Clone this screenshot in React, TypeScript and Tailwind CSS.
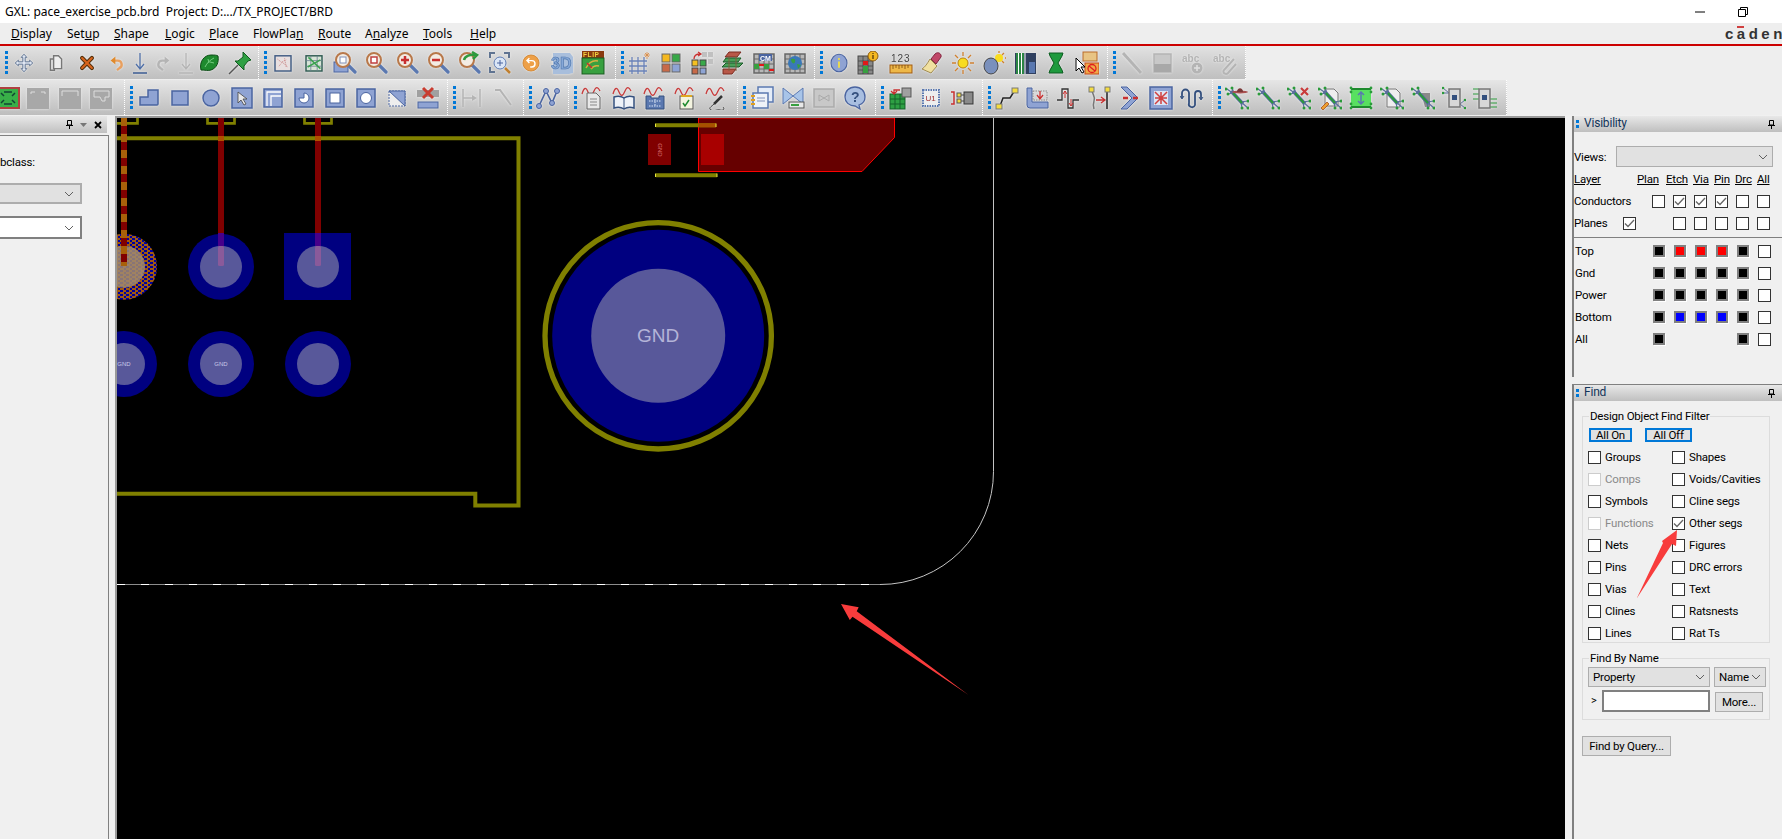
import React from "react";
import clsx from "clsx";

const FONT = "font-['Noto_Sans','Liberation_Sans',sans-serif]";
const PANEL_FONT = "font-['Roboto','Liberation_Sans',sans-serif] text-[11.5px] tracking-[-0.2px]";
const FILL = "#8fa3d3";
const EDGE = "#4a64a0";
const OFF = "#b4b4b4";

function Ico({ ml = "ml-[7px]", children }: { ml?: string; children: React.ReactNode }) {
  return (
    <svg viewBox="0 0 24 24" className={clsx("h-6 w-6 shrink-0 drop-shadow-[0_0_1px_#eeeeee]", ml)}>
      {children}
    </svg>
  );
}

// most toolbar glyphs sit a bit inside their 24px cell
function Sm({ children }: { children: React.ReactNode }) {
  return <g transform="translate(2.4 2.4) scale(.8)">{children}</g>;
}

function Grip({ n = 5 }: { n?: number }) {
  return (
    <span className="ml-[5px] mr-[2px] flex w-[3px] shrink-0 flex-col gap-[2px]">
      {Array.from({ length: n }).map((_, i) => (
        <span key={i} className="block h-[3px] w-[3px] bg-[#0078d7]" />
      ))}
    </span>
  );
}

function Group({ w, grip = true, children }: { w: string; grip?: boolean; children: React.ReactNode }) {
  return (
    <div className={clsx("flex h-full shrink-0 items-center border-r border-dotted border-white", w)}>
      {grip && <Grip />}
      {children}
    </div>
  );
}

function Mag({ children }: { children?: React.ReactNode }) {
  return (
    <>
      <path d="M15 14l7 7" stroke="#5a78b0" strokeWidth="3.2" strokeLinecap="round" />
      <circle cx="10" cy="9" r="7" fill="#f3ece4" stroke="#b8784a" strokeWidth="2" />
      {children}
    </>
  );
}

function GridBox({ stroke = "#666" }: { stroke?: string }) {
  return (
    <>
      <rect x="2" y="3" width="20" height="19" fill="#b8b8b8" stroke={stroke} strokeWidth="1.5" />
      <path d="M2 8h20M2 13h20M2 18h20M7 3v19M12 3v19M17 3v19" stroke={stroke} strokeWidth="1" />
    </>
  );
}

function Wave() {
  return <path d="M1 8c2-7 4-7 6-2s4 4 6-1 4-4 6 0" fill="none" stroke="#c83c3c" strokeWidth="1.3" />;
}

function Net({ children }: { children?: React.ReactNode }) {
  const dots = [[1, 3], [3, 8], [7, 2], [23, 15], [23, 22], [17, 22]];
  return (
    <>
      <path d="M2 3l7 5M3 8l5-1M7 2l2 5M15 16l8-1M16 16l7 6M16 16l1 6" stroke="#5a6e9e" strokeWidth="1.200" />
      <path d="M6 5l12 13" stroke="#5a6e9e" strokeWidth="3.600" />
      <path d="M8 7l9 10" stroke="#2a9a3a" strokeWidth="2" />
      {children}
      {dots.map(([x, y]) => (
        <circle key={x * 30 + y} cx={x} cy={y} r="1.500" fill="#2a9a3a" />
      ))}
    </>
  );
}

function Cursor() {
  return <path d="M1 7v13l3-3 3 5 2-1-3-5h4z" fill="#fff" stroke="#000" strokeWidth="1" />;
}

function ToolbarOne() {
  return (
    <div className="flex h-[33px] w-[1246px] bg-linear-to-b from-[#e2e2e2] to-[#bfbfbf]">
      <Group w="w-[259px]">
        <Ico ml="ml-[2px]">
          <Sm>
            <path d="M12 1l3.500 4h-2v5.500H19v-2l4 3.500-4 3.500v-2h-5.500V19h2L12 23l-3.500-4h2v-5.500H5v2L1 12l4-3.500v2h5.500V5h-2z" fill="#dfe6f2" stroke="#5f7391" strokeWidth="1.200" />
          </Sm>
        </Ico>
        <Ico ml="ml-[8px]">
          <Sm>
            <path d="M5 7h5v14H5z" fill="#e4e4e4" stroke="#777" strokeWidth="1.800" />
            <path d="M9 3h6l4 4v12H9z" fill="#eeeeee" stroke="#777" strokeWidth="1.800" />
          </Sm>
        </Ico>
        <Ico ml="ml-[7px]">
          <g transform="translate(3.600 3.600) scale(.7)">
            <path d="M5 5l14 14M19 5L5 19" stroke="#54300c" strokeWidth="6" strokeLinecap="round" />
            <path d="M5 5l14 14M19 5L5 19" stroke="#d8641c" strokeWidth="3" strokeLinecap="round" />
          </g>
        </Ico>
        <Ico ml="ml-[6px]">
          <Sm>
            <path d="M8 9h5a5 5 0 0 1 2 9.500L12 21" fill="none" stroke="#e8a060" strokeWidth="3" />
            <path d="M10 4L4 9l6 5z" fill="#e08a2c" />
          </Sm>
        </Ico>
        <Ico ml="-ml-[1px]">
          <path d="M12 2v15M8 13l4 5 4-5" fill="none" stroke="#5070a8" strokeWidth="1.300" />
          <path d="M5 22h14" stroke="#3a5a90" strokeWidth="1.500" />
        </Ico>
        <Ico ml="-ml-[1px]">
          <Sm>
            <path d="M16 9h-5a5 5 0 0 0-2 9.500L12 21" fill="none" stroke={OFF} strokeWidth="3" />
            <path d="M14 4l6 5-6 5z" fill={OFF} />
          </Sm>
        </Ico>
        <Ico ml="-ml-[1px]">
          <path d="M12 2v15M8 13l4 5 4-5" fill="none" stroke={OFF} strokeWidth="1.300" />
          <path d="M5 22h14" stroke={OFF} strokeWidth="1.500" />
        </Ico>
        <Ico ml="-ml-[1px]">
          <path d="M4 19c-2-8 3-15 10-15 3 0 6 0 7 1 1 6-1 12-7 14-3 1-6 0-10 0z" fill="#1e8a2e" stroke="#0a4a14" />
          <path d="M8 16c2-4 5-7 9-9M12 12l-1-4M13 11l4 1" fill="none" stroke="#7fd48a" strokeWidth=".9" />
        </Ico>
        <Ico ml="ml-[7px]">
          <path d="M1 23l9-9" stroke="#555" strokeWidth="1.500" />
          <path d="M15 1l8 8-3 1-4 5v4L7 10h3l5-4z" fill="#2ea043" stroke="#0f5a1e" />
        </Ico>
      </Group>
      <Group w="w-[357px]">
        <Ico ml="ml-[2px]">
          <Sm>
            <rect x="2" y="3" width="20" height="19" fill="#e8e0e0" stroke="#3f5a82" strokeWidth="1.800" />
            <path d="M5 7l5 4 6-3M7 16l4-5 7 6M14 6l2 11" stroke="#c88080" strokeDasharray="1.500 1" fill="none" />
          </Sm>
        </Ico>
        <Ico>
          <Sm>
            <rect x="2" y="3" width="20" height="19" fill="#d8e4d8" stroke="#2f5a52" strokeWidth="1.800" />
            <path d="M8 3v19M16 3v19M2 9h20M2 16h20" stroke="#6a7f90" />
            <path d="M5 5l15 14M4 17L20 8" stroke="#3aa050" strokeWidth="1.800" />
          </Sm>
        </Ico>
        <Ico>
          <rect x="1" y="11" width="14" height="10" fill={FILL} stroke={EDGE} />
          <Mag><rect x="7" y="6" width="6" height="6" fill="#fff" stroke="#8090b8" /></Mag>
        </Ico>
        <Ico>
          <Mag><rect x="7" y="6" width="6" height="6" fill="#fff" stroke="#c04040" strokeWidth="1.500" /></Mag>
        </Ico>
        <Ico>
          <Mag><path d="M6 9h8M10 5v8" stroke="#c83030" strokeWidth="2.500" /></Mag>
        </Ico>
        <Ico>
          <Mag><path d="M6 9h8" stroke="#c83030" strokeWidth="2.500" /></Mag>
        </Ico>
        <Ico>
          <Mag><path d="M7 9c1-4 6-6 12-5M15 1l5 3-4 4" fill="none" stroke="#2e9a3e" strokeWidth="2.500" /></Mag>
        </Ico>
        <Ico>
          <path d="M2 7V2h5M16 2h5v5M2 16v5h5" fill="none" stroke="#5f7391" strokeWidth="2" />
          <path d="M17 17l5 5" stroke="#c08030" strokeWidth="2.500" />
          <circle cx="12" cy="12" r="6" fill="#dbe6f6" stroke="#5a78b0" />
          <path d="M9 12h6M12 9v6" stroke="#4a64a0" />
        </Ico>
        <Ico>
          <Sm>
            <circle cx="12" cy="12" r="10" fill="#eda048" stroke="#d08028" />
            <path d="M8 9h5a4 4 0 0 1 0 8h-2M10 6L7 9l3 3" fill="none" stroke="#fff" strokeWidth="1.800" />
          </Sm>
        </Ico>
        <Ico>
          <path d="M3 2h17l3 4v16l-4 1H3z" fill="#a8bedc" />
          <text x="1" y="18" fontFamily="Liberation Sans" fontWeight="700" fontSize="16" fill="#86a8d8" stroke="#4a72a8" strokeWidth=".6">3D</text>
        </Ico>
        <Ico>
          <rect x="1" y="0" width="22" height="7" fill="#8a3a10" />
          <text x="2" y="6" fontFamily="Liberation Sans" fontWeight="700" fontSize="6.500" fill="#f0d040" letterSpacing=".6">FLIP</text>
          <rect x="1" y="7" width="22" height="16" fill="#38a040" stroke="#1a5a20" />
          <path d="M5 17c3-6 7-8 12-7M10 18c2-3 4-4 8-3" fill="none" stroke="#d8b040" strokeWidth="1.500" />
          <path d="M6 12l5 5" stroke="#c83030" strokeWidth="1.500" />
        </Ico>
      </Group>
      <Group w="w-[199px]">
        <Ico ml="ml-[2px]">
          <path d="M1 10h18M1 15h18M1 20h18M4 6v17M10 6v17M16 6v17" stroke="#6a82b8" strokeWidth="1.300" />
          <path d="M19 1v7M16 4h6M17 2l4 4M21 2l-4 4" stroke="#d88840" strokeWidth=".8" />
        </Ico>
        <Ico>
          <rect x="3" y="3" width="8" height="8" fill="#f4b820" stroke="#666" />
          <rect x="13" y="3" width="8" height="8" fill="#38a848" stroke="#666" />
          <rect x="3" y="13" width="8" height="8" fill="#c86a48" stroke="#666" />
          <rect x="13" y="13" width="8" height="8" fill="#8ea4d4" stroke="#666" />
        </Ico>
        <Ico>
          <path d="M12 1h5v5h-5zM18 1h5v5h-5zM18 8h5v5h-5z" fill="#c0c0c0" />
          <rect x="2" y="9" width="6" height="6" fill="#f4c020" stroke="#444" />
          <rect x="10" y="9" width="6" height="6" fill="#38a848" stroke="#444" />
          <rect x="2" y="17" width="6" height="6" fill="#c86a48" stroke="#444" />
          <rect x="10" y="17" width="6" height="6" fill="#8ea4d4" stroke="#444" />
          <path d="M4 8c0-3 2-5 6-5M8 1l3 2-3 2" fill="none" stroke="#c83030" strokeWidth="1.300" />
        </Ico>
        <Ico>
          <path d="M8 1h12l-4 5H4zM2 18h13l-4 5H2z" fill="#b85848" stroke="#7a2a20" />
          <path d="M5 7h15l-3 4H2zM5 12h17l-4 4H1z" fill="#48a058" stroke="#1a5a28" />
          <path d="M8 5v15M15 5v15" stroke="#806040" />
        </Ico>
        <Ico>
          <GridBox />
          <rect x="7" y="3" width="13" height="7" fill="#4a64a0" />
          <text x="8" y="9.500" fontFamily="Liberation Sans" fontWeight="700" fontSize="7" fill="#fff">CM</text>
          <path d="M7 13h5v2H7zM17 18h5v2h-5z" fill="#e01818" />
          <path d="M2 13h5v5H2zM12 13h5v5h-5z" fill="#38a040" />
        </Ico>
        <Ico>
          <GridBox />
          <circle cx="12" cy="12" r="7" fill="#3a78b8" />
          <path d="M8 8c3-1 5 0 4 3s-4 1-4-3zM14 13l4 1-3 4z" fill="#38a040" />
        </Ico>
      </Group>
      <Group w="w-[293px]">
        <Ico ml="ml-[2px]">
          <Sm>
            <ellipse cx="12" cy="12" rx="10" ry="11" fill={FILL} stroke={EDGE} strokeWidth="1.300" />
            <path d="M12 10v8" stroke="#f4e040" strokeWidth="2.200" />
            <circle cx="12" cy="7" r="1.300" fill="#f4e040" />
          </Sm>
        </Ico>
        <Ico ml="ml-[4px]">
          <rect x="3" y="5" width="15" height="18" fill="#888" stroke="#444" />
          <path d="M3 10h15M3 15h15M3 19h15M8 5v18M13 5v18" stroke="#444" strokeWidth=".8" />
          <path d="M8 10h5v4H8z" fill="#e01818" />
          <path d="M8 15h5v7H8z" fill="#38a040" />
          <circle cx="18" cy="5" r="5" fill="#f4b820" stroke="#8a5a10" />
          <path d="M18 4v4M18 2v1" stroke="#5a3a08" strokeWidth="1.300" />
        </Ico>
        <Ico ml="ml-[10px]">
          <text x="2" y="11" fontFamily="Liberation Sans" fontSize="10" letterSpacing="1" fill="#444">123</text>
          <rect x="1" y="14" width="22" height="8" fill="#eeb848" stroke="#a05a10" />
          <path d="M4 14v4M7 14v3M10 14v4M13 14v3M16 14v4M19 14v3" stroke="#7a4a10" strokeWidth=".8" />
        </Ico>
        <Ico>
          <path d="M10 8l7 7-6 7-9-4c3-2 5-5 8-10z" fill="#f0e0a0" stroke="#a08a50" />
          <path d="M11 8l4-5c3-3 7 0 6 3l-5 7z" fill="#c04868" stroke="#802840" />
        </Ico>
        <Ico>
          <circle cx="12" cy="12" r="5" fill="#f8dc20" stroke="#b88010" />
          <path d="M12 1v4M12 19v4M1 12h4M19 12h4M4 4l3 3M17 17l3 3M4 20l3-3M17 7l3-3" stroke="#d08030" strokeWidth="1.300" />
        </Ico>
        <Ico>
          <circle cx="17" cy="7" r="4" fill="#f8dc20" />
          <path d="M17 0v2M23 7h1M22 2l-2 2M22 12l-2-2" stroke="#d08030" strokeWidth="1.300" />
          <ellipse cx="9" cy="15" rx="7" ry="8" fill="#7a90bc" stroke="#444" />
        </Ico>
        <Ico>
          <rect x="2" y="2" width="21" height="21" fill="#304060" />
          <path d="M4 2v21M7 2v21M10 2v21" stroke="#2a9a3a" strokeWidth="1.500" />
          <path d="M5.500 2v21M8.500 2v21M12 2v21" stroke="#fff" strokeWidth="1" />
          <rect x="16" y="11" width="6" height="11" fill="#5a78b0" />
        </Ico>
        <Ico>
          <path d="M5 2h14l-1 3-4 7 4 7 1 3H5l1-3 4-7-4-7z" fill="#1f9a3e" stroke="#0c5a20" />
        </Ico>
        <Ico>
          <rect x="8" y="1" width="14" height="9" fill="#e8c484" stroke="#b86a28" />
          <rect x="10" y="12" width="14" height="11" fill="#f0a848" stroke="#c84818" />
          <circle cx="17" cy="17.500" r="4" fill="none" stroke="#e02020" strokeWidth="1.300" />
          <path d="M14 15l6 5" stroke="#e02020" strokeWidth="1.300" />
          <Cursor />
        </Ico>
      </Group>
      <Group w="w-[138px]">
        <Ico ml="ml-[2px]">
          <path d="M3 2l18 20" stroke={OFF} strokeWidth="3" />
        </Ico>
        <Ico>
          <rect x="3" y="3" width="17" height="18" fill="#c8c8c8" stroke={OFF} strokeWidth="1.500" />
          <rect x="3" y="13" width="17" height="8" fill="#a8a8a8" />
        </Ico>
        <Ico>
          <text x="0" y="11" fontFamily="Liberation Sans" fontWeight="700" fontSize="10" fill={OFF}>abc</text>
          <circle cx="15" cy="17" r="5.500" fill={OFF} />
          <path d="M12 17h6M15 14v6" stroke="#e0e0e0" strokeWidth="1.500" />
        </Ico>
        <Ico>
          <text x="0" y="11" fontFamily="Liberation Sans" fontWeight="700" fontSize="10" fill={OFF}>abc</text>
          <path d="M21 8L11 19c-2 3 2 5 4 3l8-9" fill="none" stroke={OFF} strokeWidth="2" />
        </Ico>
      </Group>
    </div>
  );
}

function ToolbarTwo() {
  return (
    <div className="mt-[1px] flex h-[35px] w-[1507px] bg-linear-to-b from-[#e6e6e6] to-[#bdbdbd]">
      <Group w="w-[125px]" grip={false}>
        <Ico ml="-ml-[4px]">
          <rect x="1" y="2" width="22" height="20" fill="#38b048" stroke="#b04040" strokeWidth="2" />
          <path d="M5 7l3 3M19 7l-3 3M5 17l3-3M19 17l-3-3M8 6h8M8 18h8" stroke="#143" strokeWidth="1.500" />
        </Ico>
        <Ico ml="ml-[6px]">
          <rect x="1" y="2" width="22" height="21" fill="#a8a8a8" />
          <path d="M5 8V6h4M15 6h4v2" fill="none" stroke="#ddd" />
        </Ico>
        <Ico ml="ml-[8px]">
          <rect x="1" y="2" width="22" height="21" fill="#a8a8a8" />
          <path d="M4 10V5h16v5" fill="none" stroke="#ddd" />
        </Ico>
        <Ico ml="ml-[7px]">
          <rect x="1" y="2" width="22" height="21" fill="#a8a8a8" />
          <path d="M5 5h15v6h-4v4h-3l-2-4H5z" fill="none" stroke="#ddd" />
        </Ico>
      </Group>
      <Group w="w-[323px]">
        <Ico ml="ml-[2px]">
          <path d="M11 4h10v14a1 1 0 0 1-1 1H3v-8h8z" fill={FILL} stroke={EDGE} strokeWidth="1.500" />
        </Ico>
        <Ico>
          <rect x="4" y="5" width="16" height="14" fill={FILL} stroke={EDGE} strokeWidth="1.500" />
        </Ico>
        <Ico>
          <circle cx="12" cy="12" r="8" fill={FILL} stroke={EDGE} strokeWidth="1.500" />
        </Ico>
        <Ico>
          <rect x="2" y="2" width="20" height="20" fill={FILL} stroke={EDGE} strokeWidth="1.500" />
          <path d="M8 6v11l3-3 3 5 2-1-3-5h4z" fill="#e8e8e8" stroke="#444" strokeWidth=".8" />
        </Ico>
        <Ico>
          <rect x="3" y="3" width="18" height="18" fill={FILL} stroke={EDGE} strokeWidth="1.500" />
          <path d="M6 20V6h14M10 20V10h10" fill="none" stroke="#fff" strokeWidth="1.300" />
        </Ico>
        <Ico>
          <rect x="3" y="3" width="18" height="18" fill={FILL} stroke={EDGE} strokeWidth="1.500" />
          <path d="M12 7a5 5 0 1 1-5 5h5z" fill="#fff" stroke={EDGE} />
        </Ico>
        <Ico>
          <rect x="3" y="3" width="18" height="18" fill={FILL} stroke={EDGE} strokeWidth="1.500" />
          <rect x="7" y="7" width="10" height="10" fill="#fff" stroke={EDGE} />
        </Ico>
        <Ico>
          <rect x="3" y="3" width="18" height="18" fill={FILL} stroke={EDGE} strokeWidth="1.500" />
          <circle cx="12" cy="12" r="5.500" fill="#fff" stroke={EDGE} />
        </Ico>
        <Ico>
          <path d="M4 5h16v15H4z" fill="#eeeeee" stroke={EDGE} strokeDasharray="2 1" />
          <path d="M4 5h16v15z" fill={FILL} stroke={EDGE} />
        </Ico>
        <Ico>
          <rect x="1" y="4" width="22" height="7" fill="#a0a0a0" />
          <path d="M7 2l10 10M17 2L7 12" stroke="#c83c30" strokeWidth="3" />
          <rect x="2" y="16" width="20" height="6" fill={FILL} stroke={EDGE} />
        </Ico>
      </Group>
      <Group w="w-[76px]">
        <Ico ml="ml-[2px]">
          <path d="M3 3v18M3 12h12M20 3v18" stroke={OFF} strokeWidth="1.500" />
          <path d="M12 9l5 3-5 3z" fill={OFF} />
        </Ico>
        <Ico>
          <path d="M4 4h5l11 15" fill="none" stroke={OFF} strokeWidth="2" />
        </Ico>
      </Group>
      <Group w="w-[45px]">
        <Ico ml="ml-[2px]">
          <path d="M3 20L10 5l6 12 5-12" fill="none" stroke="#4a64a0" strokeWidth="1.600" />
          <circle cx="3" cy="20" r="2.500" fill={FILL} stroke={EDGE} />
          <circle cx="10" cy="5" r="2.500" fill={FILL} stroke={EDGE} />
          <circle cx="16" cy="17" r="2.500" fill={FILL} stroke={EDGE} />
          <circle cx="21" cy="5" r="2.500" fill={FILL} stroke={EDGE} />
        </Ico>
      </Group>
      <Group w="w-[169px]">
        <Ico ml="ml-[2px]">
          <Wave />
          <path d="M6 7h9l4 4v12H6z" fill="#e8e8e8" stroke="#666" />
          <path d="M9 13h7M9 16h7M9 19h7" stroke="#888" />
        </Ico>
        <Ico>
          <Wave />
          <path d="M12 12c-3-2-7-2-10-1v11c3-1 7-1 10 1 3-2 7-2 10-1V11c-3-1-7-1-10 1z" fill="#eef2f8" stroke="#34507e" strokeWidth="1.500" />
          <path d="M12 12v11" stroke="#34507e" />
        </Ico>
        <Ico>
          <Wave />
          <path d="M3 10h5v2h8v-2h5v13H3z" fill="#5a78b0" stroke="#34507e" />
          <path d="M6 15h12M12 13v7M6 20h12" stroke="#dbe6f6" strokeDasharray="1.500 1" />
        </Ico>
        <Ico>
          <Wave />
          <rect x="6" y="10" width="13" height="13" fill="#f4f4e0" stroke="#555" />
          <path d="M7 10h11" stroke="#e0a820" strokeWidth="2" />
          <path d="M9 17l2 3 4-6" fill="none" stroke="#1e8a2e" strokeWidth="1.500" />
        </Ico>
        <Ico>
          <Wave />
          <path d="M17 10l-8 8" stroke="#333" strokeWidth="2.500" />
          <path d="M9 18c-3 3-6 4-3 6s6-1 9 0 5-1 3-3" fill="none" stroke="#444" />
        </Ico>
      </Group>
      <Group w="w-[138px]">
        <Ico ml="ml-[2px]">
          <rect x="8" y="1" width="15" height="15" fill="#e4ecf8" stroke="#5a78b0" strokeWidth="1.500" />
          <rect x="3" y="7" width="15" height="15" fill="#eef2f8" stroke="#5a78b0" strokeWidth="1.500" />
          <path d="M1 10h4M1 14h4M1 18h4" stroke="#e0a020" strokeWidth="2" />
          <path d="M7 12h8M7 15h8" stroke="#8090b8" />
        </Ico>
        <Ico>
          <path d="M2 2l10 8 10-8v16l-10-8-10 8z" fill="#a8c4e8" stroke="#5a78b0" />
          <rect x="8" y="16" width="15" height="6" fill="#e8e8e8" stroke="#555" />
          <rect x="10" y="18" width="8" height="2" fill="#38a040" />
        </Ico>
        <Ico>
          <rect x="2" y="3" width="20" height="18" fill="#c8c8c8" stroke="#aaa" strokeWidth="1.500" />
          <path d="M7 9l5 3 5-3v6l-5-3-5 3z" fill="none" stroke="#aaa" />
        </Ico>
        <Ico>
          <path d="M12 1c6 0 10 4 10 10 0 4-3 7-6 8l1 4-5-3C6 20 2 16 2 11 2 5 6 1 12 1z" fill="#a8bee0" stroke="#4a64a0" strokeWidth="1.300" />
          <text x="8" y="16" fontFamily="Liberation Sans" fontWeight="700" fontSize="14" fill="#34507e">?</text>
        </Ico>
      </Group>
      <Group w="w-[107px]">
        <Ico ml="ml-[2px]">
          <rect x="2" y="8" width="15" height="15" fill="#2ea043" stroke="#14602a" />
          <path d="M2 13h15M2 18h15M7 8v15M12 8v15" stroke="#14602a" />
          <rect x="14" y="2" width="9" height="9" fill="#a0a0a0" stroke="#555" />
          <path d="M12 4H6v3M3 5l3 3 3-3" fill="none" stroke="#c83030" strokeWidth="1.300" />
        </Ico>
        <Ico>
          <rect x="4" y="4" width="16" height="16" fill="#eeeeee" stroke="#5a78b0" strokeWidth="2" strokeDasharray="1.500 1" />
          <text x="6.500" y="15" fontFamily="Liberation Sans" fontSize="8" fill="#a03030">U1</text>
        </Ico>
        <Ico>
          <rect x="14" y="6" width="9" height="12" fill="#8a8a8a" stroke="#333" />
          <path d="M8 9h6M8 15h6" stroke="#444" />
          <rect x="7" y="7" width="4" height="4" fill="#f4dc40" stroke="#555" />
          <rect x="7" y="13" width="4" height="4" fill="#f4dc40" stroke="#555" />
          <path d="M1 6h3v12H1" fill="none" stroke="#c83030" strokeWidth="1.500" />
        </Ico>
      </Group>
      <Group w="w-[230px]">
        <Ico ml="ml-[2px]">
          <path d="M5 20l3-8h7l5-8" fill="none" stroke="#222" strokeWidth="1.500" />
          <rect x="1" y="18" width="6" height="5" fill="#f4dc40" stroke="#777" />
          <rect x="17" y="2" width="6" height="5" fill="#f4dc40" stroke="#777" />
        </Ico>
        <Ico ml="ml-[6px]">
          <path d="M2 2h5v14h16v6H5a3 3 0 0 1-3-3z" fill={FILL} stroke={EDGE} />
          <rect x="8" y="5" width="14" height="9" fill="none" stroke="#888" strokeDasharray="1.500 1" />
          <path d="M15 5v7M12 9l3 4 3-4" fill="none" stroke="#c83030" strokeWidth="1.300" />
        </Ico>
        <Ico ml="ml-[7px]">
          <path d="M1 14h5V3h6v19h5V14h6" fill="none" stroke="#333" strokeWidth="1.300" />
          <path d="M9 12V5M7 8l2-3 2 3M15 13v7M13 17l2 3 2-3" fill="none" stroke="#c83030" />
        </Ico>
        <Ico ml="ml-[7px]">
          <path d="M5 4c0 5 4 6 2 11-1 3-1 5 0 8" fill="none" stroke="#777" strokeWidth="1.500" />
          <path d="M20 5v18" stroke="#222" strokeWidth="1.500" />
          <path d="M9 14h8M14 11l4 3-4 3" fill="none" stroke="#c83030" strokeWidth="1.300" />
          <rect x="2" y="1" width="5" height="5" fill="#f4dc40" stroke="#777" />
          <rect x="18" y="1" width="5" height="5" fill="#f4dc40" stroke="#777" />
        </Ico>
        <Ico ml="ml-[7px]">
          <path d="M3 1h6l11 11L9 23H3l11-11z" fill={FILL} stroke={EDGE} />
          <path d="M5 12h5M15 12h5" stroke="#c83030" strokeWidth="2.500" />
        </Ico>
        <Ico ml="ml-[7px]">
          <rect x="1" y="1" width="22" height="22" fill={FILL} stroke={EDGE} strokeWidth="1.500" />
          <rect x="5" y="5" width="14" height="14" fill="#dde4f4" />
          <path d="M6 6l12 12M18 6L6 18M12 6v12M6 12h12" stroke="#d04040" strokeWidth="1.500" />
        </Ico>
        <Ico ml="ml-[7px]">
          <path d="M2 12V7a3.500 3.500 0 0 1 7 0v10a3 3 0 0 0 6 2V8a3 3 0 0 1 6 0v5" fill="none" stroke="#34507e" strokeWidth="1.800" />
          <path d="M0 10l2 3 2-3M19 11l2 3 2-3" fill="none" stroke="#34507e" />
        </Ico>
      </Group>
      <Group w="w-[294px]">
        <Ico ml="ml-[2px]">
          <Net>
            <ellipse cx="15" cy="6" rx="8" ry="1.500" fill="#a85050" />
            <path d="M12 6c0-5 6-5 6 0z" fill="#7a3838" />
          </Net>
        </Ico>
        <Ico><Net /></Ico>
        <Ico>
          <Net><path d="M14 2l7 7M21 2l-7 7" stroke="#c83c3c" strokeWidth="2.200" /></Net>
        </Ico>
        <Ico>
          <path d="M7 3h9l4 4v13H7z" fill="#eeeeee" stroke="#777" />
          <Net><path d="M3 22l6-6 2 2-6 6z" fill="#eea030" stroke="#a04010" strokeWidth=".7" /></Net>
        </Ico>
        <Ico>
          <rect x="2" y="3" width="20" height="18" fill="#58e060" />
          <path d="M2 3h20M2 21h20" stroke="#1e8a2e" strokeWidth="2" />
          <path d="M12 6v12M9 9l3-3 3 3M9 15l3 3 3-3" fill="none" stroke="#5a78b0" strokeWidth="1.500" />
          {[[2, 2], [2, 6], [2, 18], [2, 22], [22, 2], [22, 6], [22, 18], [22, 22]].map(([x, y]) => (
            <circle key={x * 30 + y} cx={x} cy={y} r="1.400" fill="#2a9a3a" />
          ))}
        </Ico>
        <Ico>
          <path d="M7 3h9l4 4v14H7z" fill="#eeeeee" stroke="#777" />
          <Net />
        </Ico>
        <Ico>
          <path d="M10 7h9v14h-5z" fill="#8a8a8a" />
          <Net />
        </Ico>
        <Ico>
          <path d="M1 2l6 5M1 7h6M18 18l5-4M18 18l5 4" stroke="#5a6e9e" />
          <rect x="7" y="3" width="11" height="18" fill="#d8d8d8" stroke="#777" strokeWidth="1.500" />
          <rect x="10" y="9" width="5" height="5" fill="#34507e" />
          {[[1, 2], [1, 7], [23, 14], [23, 22]].map(([x, y]) => (
            <circle key={x * 30 + y} cx={x} cy={y} r="1.300" fill="#2a9a3a" />
          ))}
        </Ico>
        <Ico>
          <path d="M0 3h6M0 8h6M0 13h6M17 13h7M17 17h7M17 21h7" stroke="#2a9a3a" />
          <rect x="6" y="3" width="11" height="19" fill="#d8d8d8" stroke="#777" strokeWidth="1.500" />
          <rect x="9" y="9" width="5" height="5" fill="#34507e" />
        </Ico>
      </Group>
    </div>
  );
}

function Chevron({ color = "#606060" }: { color?: string }) {
  return (
    <svg viewBox="0 0 10 6" className="h-[6px] w-[10px] shrink-0">
      <path d="M1 1l4 4 4-4" fill="none" stroke={color} strokeWidth="1" />
    </svg>
  );
}

function Pin() {
  return (
    <svg viewBox="0 0 7 9" className="h-[9px] w-[7px] shrink-0">
      <path d="M1.500 .5h4v4.500h-4zM0 5.500h7M3.500 5.500V9" fill="none" stroke="#000" strokeWidth="1" />
    </svg>
  );
}

function PanelHead({ title }: { title: string }) {
  return (
    <div className="flex h-4 items-center bg-linear-to-b from-[#e8e8e8] to-[#bfbfbf] pl-[2px] pr-[7px]">
      <span className="flex w-[3px] flex-col gap-[2px]">
        <span className="h-[3px] w-[3px] bg-[#0078d7]" />
        <span className="h-[3px] w-[3px] bg-[#0078d7]" />
      </span>
      <span className="ml-[5px] flex-1 pb-[2px] text-[12px] leading-none text-[#12345a]">{title}</span>
      <Pin />
    </div>
  );
}

function Check({ on, off, className }: { on?: boolean; off?: boolean; className?: string }) {
  return (
    <span
      className={clsx(
        "flex h-[13px] w-[13px] shrink-0 items-center justify-center border bg-white",
        off ? "border-[#cccccc]" : "border-[#333333]",
        className,
      )}
    >
      {on && (
        <svg viewBox="0 0 11 11" className="h-[11px] w-[11px]">
          <path d="M1 5.500l3 3 6-6.500" fill="none" stroke="#666" strokeWidth="1.300" />
        </svg>
      )}
    </span>
  );
}

const LAYERS: [string, string[]][] = [
  ["Top", ["k", "r", "r", "r", "k", "w"]],
  ["Gnd", ["k", "k", "k", "k", "k", "w"]],
  ["Power", ["k", "k", "k", "k", "k", "w"]],
  ["Bottom", ["k", "b", "b", "b", "k", "w"]],
  ["All", ["k", "", "", "", "k", "w"]],
];

function Chip({ kind }: { kind: string }) {
  if (!kind) return <span />;
  if (kind === "w") return <Check />;
  return (
    <span
      className={clsx(
        "block h-[12px] w-[12px] border-2 border-[#808080] shadow-[1px_1px_0_#ffffff]",
        kind === "k" && "bg-black",
        kind === "r" && "bg-[#ff0000]",
        kind === "b" && "bg-[#0000ff]",
      )}
    />
  );
}

function Visibility() {
  return (
    <section className="h-[261px] border-l-2 border-[#808080]">
      <PanelHead title="Visibility" />
      <div className="mt-[14px] flex h-[21px] items-center">
        <span className="w-[42px]">Views:</span>
        <span className="flex h-[21px] w-[157px] items-center justify-end border border-[#adadad] bg-[#e1e1e1] pr-[4px]">
          <Chevron />
        </span>
      </div>
      <div className="mt-[4px] flex h-4 items-center underline">
        <span className="w-[63px]">Layer</span>
        <span className="w-[29px]">Plan</span>
        <span className="w-[27px]">Etch</span>
        <span className="w-[21px]">Via</span>
        <span className="w-[21px]">Pin</span>
        <span className="w-[22px]">Drc</span>
        <span>All</span>
      </div>
      <div className="mt-[3px] grid h-[22px] grid-cols-[78px_repeat(6,21px)] items-center">
        <span>Conductors</span>
        {[false, true, true, true, false, false].map((c, i) => (
          <Check key={i} on={c} />
        ))}
      </div>
      <div className="grid h-[22px] grid-cols-[49px_29px_repeat(6,21px)] items-center">
        <span>Planes</span>
        <Check on />
        <span />
        {[0, 1, 2, 3, 4].map((i) => (
          <Check key={i} />
        ))}
      </div>
      <div className="mt-[3px] border-t border-[#808080] pt-[2px]">
        {LAYERS.map(([name, cells]) => (
          <div key={name} className="grid h-[22px] grid-cols-[79px_repeat(6,21px)] items-center">
            <span className="pl-[1px]">{name}</span>
            {cells.map((c, i) => (
              <Chip key={i} kind={c} />
            ))}
          </div>
        ))}
      </div>
    </section>
  );
}

const FILTERS: [string, boolean, string][] = [
  ["Groups", false, "Shapes"],
  ["Comps", true, "Voids/Cavities"],
  ["Symbols", false, "Cline segs"],
  ["Functions", true, "Other segs"],
  ["Nets", false, "Figures"],
  ["Pins", false, "DRC errors"],
  ["Vias", false, "Text"],
  ["Clines", false, "Ratsnests"],
  ["Lines", false, "Rat Ts"],
];

function Find() {
  return (
    <section className="mt-[7px] flex-1 border-l-2 border-t border-[#808080]">
      <PanelHead title="Find" />
      <fieldset className="ml-[8px] mt-[7px] h-[235px] w-[188px] border border-[#dcdcdc]">
        <legend className="ml-[6px] h-4 px-[1px] leading-4">Design Object Find Filter</legend>
        <div className="mt-[4px] flex pl-[6px]">
          <button className="h-[14px] w-[43px] border-2 border-[#0078d7] bg-[#e1e1e1] leading-[10px]">All On</button>
          <button className="ml-[13px] h-[14px] w-[47px] border-2 border-[#0078d7] bg-[#e1e1e1] leading-[10px]">All Off</button>
        </div>
        <div className="mt-[4px] pl-[5px]">
          {FILTERS.map(([a, dis, b]) => (
            <div key={a} className="grid h-[22px] grid-cols-[84px_1fr] items-center">
              <label className={clsx("flex items-center gap-[4px]", dis && "text-[#8a8a8a]")}>
                <Check off={dis} />
                {a}
              </label>
              <label className="flex items-center gap-[4px]">
                <Check on={b === "Other segs"} />
                {b}
              </label>
            </div>
          ))}
        </div>
      </fieldset>
      <fieldset className="ml-[8px] mt-[7px] h-[70px] w-[188px] border border-[#dcdcdc]">
        <legend className="ml-[6px] h-4 px-[1px] leading-4">Find By Name</legend>
        <div className="mt-[1px] flex gap-[4px] pl-[5px]">
          <span className="flex h-[20px] w-[122px] items-center justify-between border border-[#adadad] bg-[#e1e1e1] pl-[4px] pr-[4px]">
            Property
            <Chevron />
          </span>
          <span className="flex h-[20px] w-[52px] items-center justify-between border border-[#adadad] bg-[#e1e1e1] pl-[4px] pr-[4px]">
            Name
            <Chevron />
          </span>
        </div>
        <div className="mt-[2px] flex items-center pl-[8px]">
          <span className="w-[6px] text-[11px]">&gt;</span>
          <span className="ml-[5px] block h-[22px] w-[108px] border-2 border-[#808080] bg-white" />
          <button className="ml-[5px] mt-[3px] h-[20px] w-[48px] border border-[#adadad] bg-[#e1e1e1]">More...</button>
        </div>
      </fieldset>
      <button className="ml-[8px] mt-[16px] block h-[20px] w-[89px] whitespace-nowrap border border-[#adadad] bg-[#e1e1e1]">Find by Query...</button>
    </section>
  );
}

function LeftPanel() {
  return (
    <aside className={clsx("w-[109px] shrink-0", PANEL_FONT)}>
      <div className="flex h-[17px] w-[107px] items-center justify-end gap-[7px] bg-linear-to-b from-[#e8e8e8] to-[#c0c0c0] pr-[5px]">
        <Pin />
        <svg viewBox="0 0 7 4" className="h-[4px] w-[7px]"><path d="M0 0h7L3.500 4z" fill="#777" /></svg>
        <svg viewBox="0 0 8 8" className="h-2 w-2"><path d="M1 1l6 6M7 1L1 7" stroke="#000" strokeWidth="1.800" /></svg>
      </div>
      <div className="mt-[2px] h-[705px] border-r border-t border-[#808080] pt-[18px]">
        <p className="h-4 leading-4">bclass:</p>
        <div className="mt-[13px] flex h-[21px] w-[82px] items-center justify-end border-2 border-l-0 border-[#adadad] bg-[#e1e1e1] pr-[6px]">
          <Chevron />
        </div>
        <div className="mt-[12px] flex h-[23px] w-[82px] items-center justify-end border-2 border-l-0 border-[#808080] bg-white pr-[6px]">
          <Chevron />
        </div>
      </div>
    </aside>
  );
}

const OLIVE = "#808000";
const NAVY = "#000080";
const HOLE = "#58589a";

function Pad({ x, y, label }: { x: number; y: number; label?: boolean }) {
  return (
    <>
      <circle cx={x} cy={y} r="33" fill={NAVY} />
      <circle cx={x} cy={y} r="21" fill={HOLE} />
      {label && (
        <text x={x} y={y + 2} textAnchor="middle" fontFamily="Liberation Sans" fontSize="6" fill="#c8c8e8">GND</text>
      )}
    </>
  );
}

function Trace({ x }: { x: number }) {
  return (
    <>
      <rect x={x - 3} y="118" width="6" height="115" fill="#800000" />
      <rect x={x - 3} y="136" width="6" height="5" fill="#b05000" />
      <rect x={x - 3} y="233" width="6" height="13" fill="#48008a" />
      <rect x={x - 3} y="246" width="6" height="20" rx="1.500" fill="#8a5a9a" />
    </>
  );
}

function Board() {
  return (
    <svg viewBox="117 118 1448 721" preserveAspectRatio="none" className="block h-full w-full bg-black">
      <defs>
        <pattern id="hatch" width="6" height="4" patternUnits="userSpaceOnUse">
          <rect width="6" height="4" fill="#0000a0" />
          <rect y="0" width="4" height="2" fill="#a05a10" />
          <rect x="3" y="2" width="4" height="2" fill="#a05a10" />
        </pattern>
      </defs>

      {/* board outline */}
      <path d="M993.500 118V471.500A113 113 0 0 1 880 584.500" fill="none" stroke="#c4c4c4" />
      <path d="M117 584.500H880" stroke="#8c8c8c" />
      <path d="M117 584.500H880" stroke="#ffffff" strokeDasharray="8 16" />

      {/* package silk */}
      <path d="M117 138.300H518.500V505.500H475.300V493.700H117" fill="none" stroke={OLIVE} strokeWidth="4" />
      <path d="M117 123.400H137.500V118M207.500 118V123.400H234.500V118M304.500 118V123.400H331.500V118" fill="none" stroke={OLIVE} strokeWidth="2.700" />

      {/* pads, row one */}
      <circle cx="124" cy="266.700" r="33" fill="url(#hatch)" />
      <circle cx="124" cy="266.700" r="21" fill="#a08a70" fillOpacity=".85" />
      <Pad x={221} y={266.7} />
      <rect x="284" y="233" width="67" height="67" fill={NAVY} />
      <circle cx="318" cy="266.700" r="21" fill={HOLE} />
      <rect x="121" y="118" width="6" height="148" fill="#800000" />
      <path d="M124 118V266" stroke="#a8600a" strokeWidth="6" strokeDasharray="8 8" />
      <Trace x={221} />
      <Trace x={318} />

      {/* pads, row two */}
      <Pad x={124} y={364} label />
      <Pad x={221} y={364} label />
      <Pad x={318} y={364} />

      {/* top copper shape */}
      <path d="M698.500 118H894.500V137.500L862 171.500H698.500Z" fill="#660000" stroke="#ff0000" />
      <rect x="648" y="134" width="23" height="31" fill="#800000" />
      <rect x="701" y="134" width="23" height="31" fill="#a80000" />
      <text x="0" y="0" transform="translate(657.500 150) rotate(90)" textAnchor="middle" fontFamily="Liberation Sans" fontSize="6" fill="#d87070">GND</text>
      <path d="M656 125.300H716M656 175.300H717" stroke={OLIVE} strokeWidth="4" />
      <path d="M698.500 125.300H716" stroke="#a85000" strokeWidth="4" />
      <path d="M655.500 123.500v3.500M716 123.500v3.500M655.500 173.500v3.500M717 173.500v3.500" stroke="#e8e840" />

      {/* mounting hole */}
      <circle cx="658.200" cy="335.800" r="113.200" fill="none" stroke={OLIVE} strokeWidth="5.300" />
      <circle cx="658.200" cy="335.800" r="106" fill={NAVY} />
      <circle cx="658.200" cy="335.800" r="67" fill={HOLE} />
      <text x="658.200" y="342" textAnchor="middle" fontFamily="Liberation Sans" fontSize="19" fill="#b4b4d8">GND</text>
    </svg>
  );
}

export default function App() {
  return (
    <div className={clsx("relative flex h-screen w-screen flex-col overflow-hidden bg-[#eeeeee] text-[12px] leading-4 text-black", FONT)}>
      <header className="flex h-[23px] shrink-0 items-center bg-white pl-[5px]">
        <span className="flex-1 whitespace-pre">GXL: pace_exercise_pcb.brd  Project: D:.../TX_PROJECT/BRD</span>
        <svg viewBox="0 0 10 2" className="mr-[33px] h-[2px] w-[10px]"><path d="M0 1h10" stroke="#000" /></svg>
        <svg viewBox="0 0 10 10" className="mr-[34px] h-[10px] w-[10px]">
          <path d="M.5 2.500h7v7h-7zM2.500 2.500v-2h7v7h-2" fill="none" stroke="#000" />
        </svg>
      </header>
      <nav className="flex h-[21px] shrink-0 items-center justify-between">
        <div className="flex items-center pl-[11px]">
          <span className="w-[56px]"><u>D</u>isplay</span>
          <span className="w-[47px]">Set<u>u</u>p</span>
          <span className="w-[51px]"><u>S</u>hape</span>
          <span className="w-[44px]"><u>L</u>ogic</span>
          <span className="w-[44px]"><u>P</u>lace</span>
          <span className="w-[65px]">FlowPla<u>n</u></span>
          <span className="w-[47px]"><u>R</u>oute</span>
          <span className="w-[58px]">A<u>n</u>alyze</span>
          <span className="w-[47px]"><u>T</u>ools</span>
          <span><u>H</u>elp</span>
        </div>
        <div className="relative w-[57px] whitespace-nowrap font-['Liberation_Sans',sans-serif] text-[15px] font-bold tracking-[3.500px] text-[#333333]">
          caden
          <span className="absolute left-[12px] top-0 h-[2px] w-[7px] bg-[#d04040]" />
        </div>
      </nav>
      <div className="h-[2px] shrink-0 bg-[#cc0000]" />
      <ToolbarOne />
      <ToolbarTwo />
      <main className="flex min-h-0 flex-1 bg-[#f0f0f0] pt-[1px]">
        <LeftPanel />
        <div className="ml-[6px] min-w-0 flex-1 border-l-2 border-t-2 border-[#9a9a9a]">
          <Board />
        </div>
        <aside className={clsx("ml-[7px] flex w-[210px] shrink-0 flex-col bg-[#f0f0f0]", PANEL_FONT)}>
          <Visibility />
          <Find />
        </aside>
      </main>

      {/* annotation arrows drawn over the screenshot */}
      <svg viewBox="0 0 1782 839" className="pointer-events-none absolute inset-0 h-full w-full">
        <path d="M841 604L858.700 607.300 856.700 611.300 968.600 695 852.500 616.700 849.800 620z" fill="#f83c3c" />
        <path d="M1677 530L1676 546 1672 544 1636.700 598.500 1663 543 1662 541z" fill="#f83c3c" />
      </svg>
    </div>
  );
}
